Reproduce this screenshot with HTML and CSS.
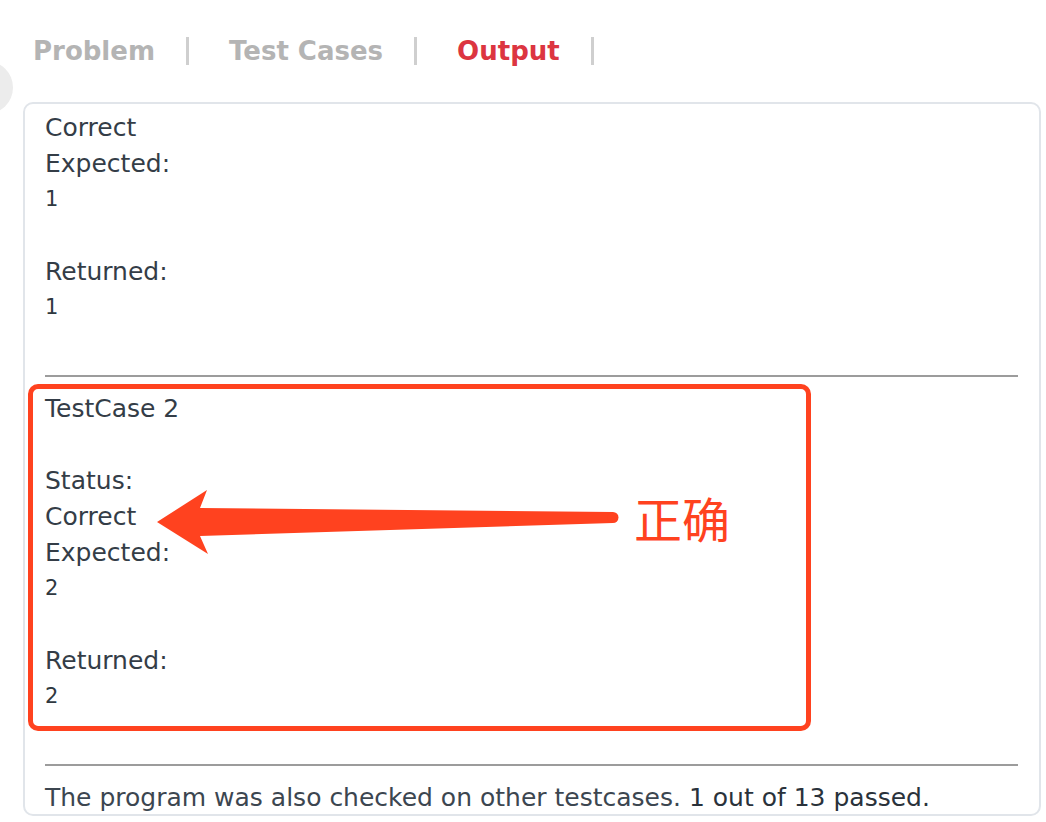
FILE: index.html
```html
<!DOCTYPE html>
<html lang="en">
<head>
<meta charset="utf-8">
<title>Output</title>
<link rel="stylesheet" href="styles.css">
</head>
<body>
<div class="fab"></div>
<nav class="tabs">
  <span class="tab">Problem</span><span class="bar"></span>
  <span class="tab">Test Cases</span><span class="bar"></span>
  <span class="tab active">Output</span><span class="bar"></span>
</nav>
<section class="card">
  <div class="case">
    <div class="line">Correct</div>
    <div class="line">Expected:</div>
    <div class="num">1</div>
    <div class="blank"></div>
    <div class="line">Returned:</div>
    <div class="num">1</div>
    <div class="blank"></div>
  </div>
  <hr class="sep">
  <div class="case">
    <div class="line">TestCase 2</div>
    <div class="blank"></div>
    <div class="line">Status:</div>
    <div class="line">Correct</div>
    <div class="line">Expected:</div>
    <div class="num">2</div>
    <div class="blank"></div>
    <div class="line">Returned:</div>
    <div class="num">2</div>
    <div class="blank"></div>
  </div>
  <hr class="sep">
  <div class="line summary"><span class="soft">The program was also checked on other testcases.</span> <span class="strong">1 out of 13 passed.</span></div>
</section>

<div class="highlight"></div>
<svg class="arrow" width="470" height="75" viewBox="0 0 470 75">
  <polygon points="7,37 57,5 50,23 463,27 463,38 50,51 58,69" fill="#ff421f"/>
  <circle cx="463" cy="32.5" r="5.5" fill="#ff421f"/>
</svg>
<div class="note">正确</div>
</body>
</html>
```
FILE: styles.css
```css
html, body {
  margin: 0;
  padding: 0;
  background: #ffffff;
}
body {
  position: relative;
  width: 1046px;
  height: 822px;
  overflow: hidden;
  font-family: "DejaVu Sans", "Noto Sans", sans-serif;
  color: #343d47;
}
.fab {
  position: absolute;
  left: -40px;
  top: 61px;
  width: 53px;
  height: 53px;
  border-radius: 50%;
  background: #ececec;
}
.tabs {
  display: flex;
  align-items: center;
  height: 36px;
  padding: 33px 0 0 33px;
}
.tab {
  font-size: 26px;
  font-weight: bold;
  line-height: 36px;
  color: #b4b4b4;
}
.tab.active {
  color: #dc3541;
}
.bar {
  width: 3px;
  height: 28px;
  background: #cfcfcf;
  margin: 0 40px 0 31px;
}
.card {
  margin: 33px 0 0 23px;
  width: 1018px;
  height: 714px;
  box-sizing: border-box;
  border: 2px solid #e1e5ea;
  border-radius: 10px;
  padding: 6px 21px 0 20px;
  overflow: hidden;
}
.line {
  font-size: 25px;
  line-height: 36px;
  white-space: nowrap;
}
.num {
  font-size: 21px;
  line-height: 34px;
  margin-bottom: 2px;
  color: #2f3840;
}
.blank {
  height: 36px;
}
.sep {
  height: 0;
  border: 0;
  border-top: 2px solid #9c9c9c;
  margin: 13px 0 14px;
}
.summary .soft {
  color: #3c4650;
}
.summary .strong {
  color: #2a323b;
}
.highlight {
  position: absolute;
  left: 28px;
  top: 384px;
  width: 783px;
  height: 347px;
  box-sizing: border-box;
  border: 5px solid #ff421f;
  border-radius: 10px;
}
.arrow {
  position: absolute;
  left: 150px;
  top: 485px;
}
.note {
  position: absolute;
  left: 634px;
  top: 493px;
  font-family: "Noto Sans CJK SC", sans-serif;
  font-size: 48px;
  line-height: 48px;
  color: #ff421f;
}
```
